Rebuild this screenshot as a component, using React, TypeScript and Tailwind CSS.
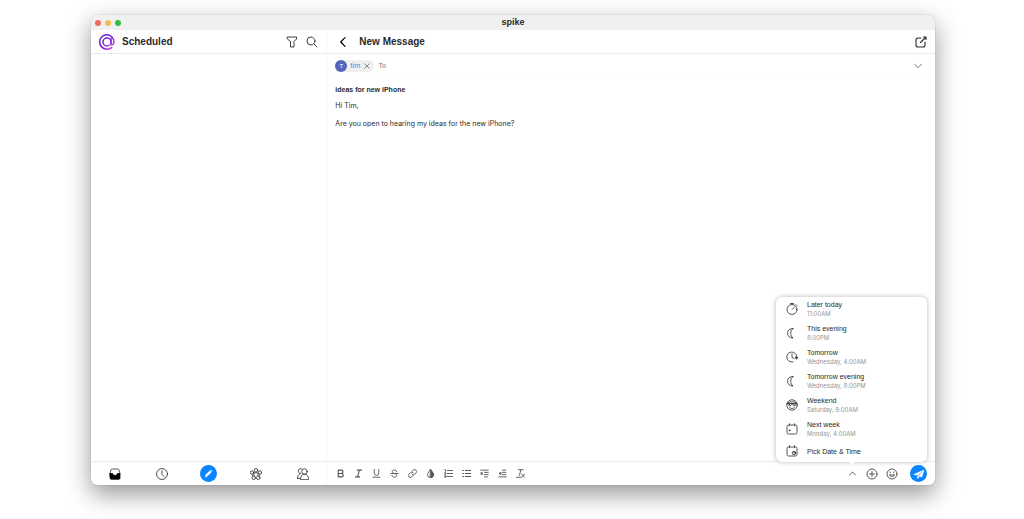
import type { ReactNode } from "react"

type IconProps = { children: ReactNode; className?: string; width?: number }

function Icon({ children, className = "size-3", width = 1.6 }: IconProps) {
  return (
    <svg
      viewBox="0 0 24 24"
      fill="none"
      stroke="currentColor"
      strokeWidth={width}
      strokeLinecap="round"
      strokeLinejoin="round"
      className={`shrink-0 ${className}`}
      aria-hidden="true"
    >
      {children}
    </svg>
  )
}

const moon = <path d="M14 3C7 3 3 7 3 12.500S7 22 14 22c-3-2-4.500-5.500-4.500-9.500S11 5 14 3z" />

const calendar = (
  <path d="M6 4H5a3 3 0 0 0-3 3v12a3 3 0 0 0 3 3h14a3 3 0 0 0 3-3V7a3 3 0 0 0-3-3h-1M9 4h6M7 1.500v4M17 1.500v4" />
)

const scheduleOptions = [
  {
    title: "Later today",
    time: "11:00AM",
    icon: (
      <>
        <circle cx="12" cy="13" r="10" />
        <path d="M9 1h6M12 13l5-5M20 3l2 2M12 1v2" />
      </>
    ),
  },
  { title: "This evening", time: "8:00PM", icon: moon },
  {
    title: "Tomorrow",
    time: "Wednesday, 4:00AM",
    icon: (
      <>
        <path d="M14 21.800A10 10 0 1 1 21.500 12" />
        <path d="M12 6v7l4 2" />
        <path fill="currentColor" d="M19 12.500h4.500l-2.200 3.500z" />
      </>
    ),
  },
  { title: "Tomorrow evening", time: "Wednesday, 8:00PM", icon: moon },
  {
    title: "Weekend",
    time: "Saturday, 9:00AM",
    icon: (
      <>
        <circle cx="12" cy="12" r="10.500" />
        <path d="M2 9h20M4 9c0 6.500 7 6.500 7.500 0M12.500 9c.500 6.500 7.500 6.500 7.500 0M7.500 17.500c2.500 2 6.500 2 9 0M5 7c4-2 10-2 14 0M6 10l3 3M15 10l3 3" />
      </>
    ),
  },
  {
    title: "Next week",
    time: "Monday, 4:00AM",
    icon: (
      <>
        {calendar}
        <path d="M7 14h1.500v1.500H7z" />
      </>
    ),
  },
  {
    title: "Pick Date & Time",
    icon: (
      <>
        {calendar}
        <circle cx="16" cy="16" r="3.500" />
        <path d="M16 14.500V16h1.500" />
      </>
    ),
  },
]

const formatTools = [
  { label: "Bold", icon: <path strokeWidth="3" d="M6 3h8a4.300 4.300 0 0 1 0 9H6zM6 12h9a4.300 4.300 0 0 1 0 9H6z" /> },
  { label: "Italic", icon: <path strokeWidth="2.800" d="M9 3h11M4 21h11M14.500 3l-5 18" /> },
  { label: "Underline", icon: <path d="M6 1v10a6 6 0 0 0 12 0V1M3 22h18" /> },
  {
    label: "Strikethrough",
    icon: <path d="M18 7c-1-6-12-6-12 0 0 2 2 4 5 5M2 12h20M13 12c8 2 6 10-1 10-4 0-6-2-7-5" />,
  },
  {
    label: "Link",
    icon: (
      <path d="M10 14a5 5 0 0 0 7.500.500l4-4a5 5 0 0 0-7.500-7.500L11 6M14 10a5 5 0 0 0-7.500-.500l-4 4a5 5 0 0 0 7.500 7.500L13 18" />
    ),
  },
  {
    label: "Text colour",
    icon: (
      <>
        <path d="M12 1C9 7 4 10 4 15a8 8 0 0 0 16 0c0-5-5-8-8-14z" />
        <path fill="currentColor" d="M12 1c3 6 8 9 8 14a8 8 0 0 1-8 8z" />
      </>
    ),
  },
  { label: "Numbered list", icon: <path d="M9 4h14M9 12h14M9 20h14M2 2h2v4M2 10h3l-3 4h3M2 18h3v4H2M3 20h2" /> },
  { label: "Bulleted list", icon: <path d="M9 4h14M9 12h14M9 20h14M2 4h2M2 12h2M2 20h2" strokeWidth="3" /> },
  {
    label: "Indent",
    icon: (
      <>
        <path d="M2 3h20M12 9h10M12 15h10M12 21h8" />
        <path fill="currentColor" d="M4 9l4 3-4 3z" />
      </>
    ),
  },
  {
    label: "Outdent",
    icon: (
      <>
        <path d="M12 3h9M12 9h9M12 15h9M2 21h20" />
        <path fill="currentColor" d="M7 9l-4 3 4 3z" />
      </>
    ),
  },
  { label: "Clear formatting", icon: <path d="M6 2h13M13 2L9 17M1 22h12M15 13l8 9M23 13l-8 9" /> },
]

const navItems = [
  {
    label: "Inbox",
    icon: (
      <>
        <path d="M2 11L4 4c.500-1.500 1-2 3-2h10c2 0 2.500.500 3 2l2 7" />
        <path fill="currentColor" className="text-black" d="M2 11h5c1 5 9 5 10 0h5v9a2.500 2.500 0 0 1-2.500 2.500h-15A2.500 2.500 0 0 1 2 20z" />
      </>
    ),
  },
  {
    label: "Scheduled",
    icon: (
      <>
        <circle cx="12" cy="12" r="11" />
        <path d="M12 5v8l4 4" />
      </>
    ),
  },
  { label: "Compose", icon: null },
  {
    label: "Groups",
    icon: (
      <>
        <circle cx="12" cy="4.500" r="3.500" />
        <circle cx="4" cy="9" r="3.300" />
        <circle cx="20" cy="9" r="3.300" />
        <circle cx="7.500" cy="19.500" r="3.500" />
        <circle cx="16.500" cy="19.500" r="3.500" />
        <path d="M8 10.500c2-2 6-2 8 0M8 10.500c-1 2 0 4 1 5M16 10.500c1 2 0 4-1 5M4 12.500l2 3.500M20 12.500l-2 3.500" />
      </>
    ),
  },
  {
    label: "Contacts",
    icon: (
      <>
        <path d="M7.500 11A5 5 0 1 1 11 2.500M1 21c0-5 2-8 6-10M1 21h5" />
        <circle cx="15" cy="7" r="5.500" />
        <path d="M7 22.500c0-7 3-10 8-10s8 3 8 10z" />
      </>
    ),
  },
]

function Logo() {
  return (
    <svg viewBox="0 0 32 32" fill="none" className="size-4 shrink-0" aria-hidden="true">
      <defs>
        <linearGradient id="logo" x1="0" y1="0" x2="1" y2="1">
          <stop offset="0" stopColor="#5a2bd0" />
          <stop offset="0.600" stopColor="#8a22d8" />
          <stop offset="1" stopColor="#d94bea" />
        </linearGradient>
      </defs>
      <g stroke="url(#logo)" strokeWidth="3" strokeLinecap="round">
        <circle cx="16" cy="16" r="8" />
        <path d="M24 9v10c0 4 6 4 6-3A14.300 14.300 0 1 0 16 30.300c4 0 7-1 9.500-3" />
      </g>
    </svg>
  )
}

function Sidebar() {
  return (
    <aside className="flex w-[28%] shrink-0 flex-col border-r border-[#f4f4f4]">
      <header className="flex h-6 items-center border-b border-[#ececec] px-2">
        <Logo />
        <h1 className="ml-[7px] flex-1 text-[10px] font-bold">Scheduled</h1>
        <button aria-label="Filter" className="mr-2">
          <Icon width={1.8}>
            <path d="M3 2h18v4l-5 5v11H9V11L3 6z" />
          </Icon>
        </button>
        <button aria-label="Search">
          <Icon width={1.8}>
            <circle cx="10" cy="10" r="8" />
            <path d="M16 16l6 6" />
          </Icon>
        </button>
      </header>
      <div className="flex-1" />
      <nav className="flex h-6 items-center justify-around border-t border-[#ececec]">
        {navItems.map((item) =>
          item.icon ? (
            <button key={item.label} aria-label={item.label} className="flex w-[17px] justify-center">
              <Icon>{item.icon}</Icon>
            </button>
          ) : (
            <button
              key={item.label}
              aria-label={item.label}
              className="flex size-[17px] items-center justify-center rounded-full bg-[#0a84ff] text-white"
            >
              <Icon className="size-[9px]" width={1}>
                <path fill="currentColor" d="M3 21l1.500-5.500L15 5l4 4L8.500 19.500zM17 3.500l1.500-1.500L22 5.500 20.500 7z" />
              </Icon>
            </button>
          ),
        )}
      </nav>
    </aside>
  )
}

function ScheduleMenu() {
  return (
    <div className="absolute right-2 -bottom-px w-[151px] rounded-md bg-white pb-px shadow-[0_0_5px_rgba(0,0,0,0.28)]">
      <ul>
        {scheduleOptions.map((option) => (
          <li key={option.title}>
            <button className={`flex w-full items-center px-[10px] text-left ${option.time ? "h-6" : "h-5"}`}>
              <Icon>{option.icon}</Icon>
              <span className="ml-[9px] text-[7px] leading-[9px]">
                <span className="block">{option.title}</span>
                {option.time && (
                  <span className="block font-[Inter,sans-serif] text-[6px] text-[#949494]">{option.time}</span>
                )}
              </span>
            </button>
          </li>
        ))}
      </ul>
      <span className="absolute right-[73px] -bottom-[2px] size-1 rotate-45 bg-white" />
    </div>
  )
}

function Composer() {
  return (
    <main className="flex min-w-0 flex-1 flex-col">
      <header className="flex h-6 items-center border-b border-[#ececec] px-2">
        <button aria-label="Back">
          <Icon className="size-4 text-black" width={1.8}>
            <path d="M15 5.500L8.500 12l6.500 6.500" />
          </Icon>
        </button>
        <h2 className="ml-2 flex-1 text-[10px] font-bold">New Message</h2>
        <button aria-label="Open in new window">
          <Icon width={2.2}>
            <path d="M12 4H6a4 4 0 0 0-4 4v10a4 4 0 0 0 4 4h10a4 4 0 0 0 4-4v-6M11 13L22 2M17 2h5v5" />
          </Icon>
        </button>
      </header>

      <div className="flex h-[25px] items-center border-b border-[#fafafa] px-2 text-[7px]">
        <span className="flex h-3 items-center rounded-full bg-[#f0f0f1] pr-[3px]">
          <span className="flex size-3 items-center justify-center rounded-full bg-[#5464ba] text-[6px] text-white">
            T
          </span>
          <span className="mx-[3px] font-[Inter,sans-serif] text-[#2490ff]">tim</span>
          <button aria-label="Remove tim" className="text-[#555]">
            <Icon className="size-2" width={2}>
              <path d="M5 5l14 14M19 5L5 19" />
            </Icon>
          </button>
        </span>
        <input
          aria-label="To"
          placeholder="To"
          className="ml-1 min-w-0 flex-1 outline-none placeholder:text-[#777]"
        />
        <button aria-label="Show more fields" className="mr-1 text-[#555]">
          <Icon className="size-[10px]" width={2}>
            <path d="M4 8l8 8 8-8" />
          </Icon>
        </button>
      </div>

      <div className="flex flex-1 flex-col px-2 pt-[7px]">
        <input
          aria-label="Subject"
          defaultValue="ideas for new iPhone"
          className="h-2 text-[7px] font-bold outline-none"
        />
        <textarea
          aria-label="Message"
          defaultValue={"Hi Tim,\n\nAre you open to hearing my ideas for the new iPhone?"}
          className="mt-[7px] flex-1 resize-none font-[Inter,sans-serif] text-[7px] leading-[9px] outline-none"
        />
      </div>

      <div className="relative">
        <ScheduleMenu />
      </div>
      <footer className="flex h-6 items-center border-t border-[#ececec] px-2 text-[#555]">
        <div className="flex flex-1 gap-2">
          {formatTools.map((tool) => (
            <button key={tool.label} aria-label={tool.label} className="flex w-[10px] justify-center">
              <Icon className="size-[9px]" width={2.4}>
                {tool.icon}
              </Icon>
            </button>
          ))}
        </div>
        <div className="flex items-center gap-2">
          <button aria-label="Schedule send" className="flex w-3 justify-center">
            <Icon className="size-[9px]" width={2.6}>
              <path d="M4 16l8-8 8 8" />
            </Icon>
          </button>
          <button aria-label="Add">
            <Icon width={2}>
              <circle cx="12" cy="12" r="10" />
              <path d="M12 7v10M7 12h10" />
            </Icon>
          </button>
          <button aria-label="Emoji">
            <Icon width={2}>
              <circle cx="12" cy="12" r="10" />
              <path d="M8.500 8v1.500M15.500 8v1.500M7 14.500c2 3.500 8 3.500 10 0z" />
            </Icon>
          </button>
          <button
            aria-label="Send"
            className="ml-1 flex size-[17px] items-center justify-center rounded-full bg-[#0a84ff] text-white"
          >
            <svg viewBox="0 0 24 24" fill="currentColor" className="size-3" aria-hidden="true">
              <path d="M0 13L23 3l-14 12zM10 16L23 3l-5 16zM8 16l5 2-4 4z" />
            </svg>
          </button>
        </div>
      </footer>
    </main>
  )
}

export default function App() {
  return (
    <div className="flex min-h-screen bg-white pt-[15px] pr-[89px] pb-[34px] pl-[91px] font-['Liberation_Sans',Arial,sans-serif] text-[#2a2a2a]">
      <div className="flex min-w-0 flex-1 flex-col overflow-hidden rounded-md bg-white shadow-[0_9px_24px_rgba(0,0,0,0.42),0_0_1px_rgba(0,0,0,0.4)]">
        <div className="grid h-[15px] grid-cols-3 items-center bg-[#f0f0f0] px-1">
          <div className="flex gap-1">
            <span className="size-[6px] rounded-full bg-[#ee6a5f]" />
            <span className="size-[6px] rounded-full bg-[#f5bd4f]" />
            <span className="size-[6px] rounded-full bg-[#2fbf46]" />
          </div>
          <span className="text-center text-[9px] leading-none font-bold">spike</span>
        </div>
        <div className="flex flex-1">
          <Sidebar />
          <Composer />
        </div>
      </div>
    </div>
  )
}
